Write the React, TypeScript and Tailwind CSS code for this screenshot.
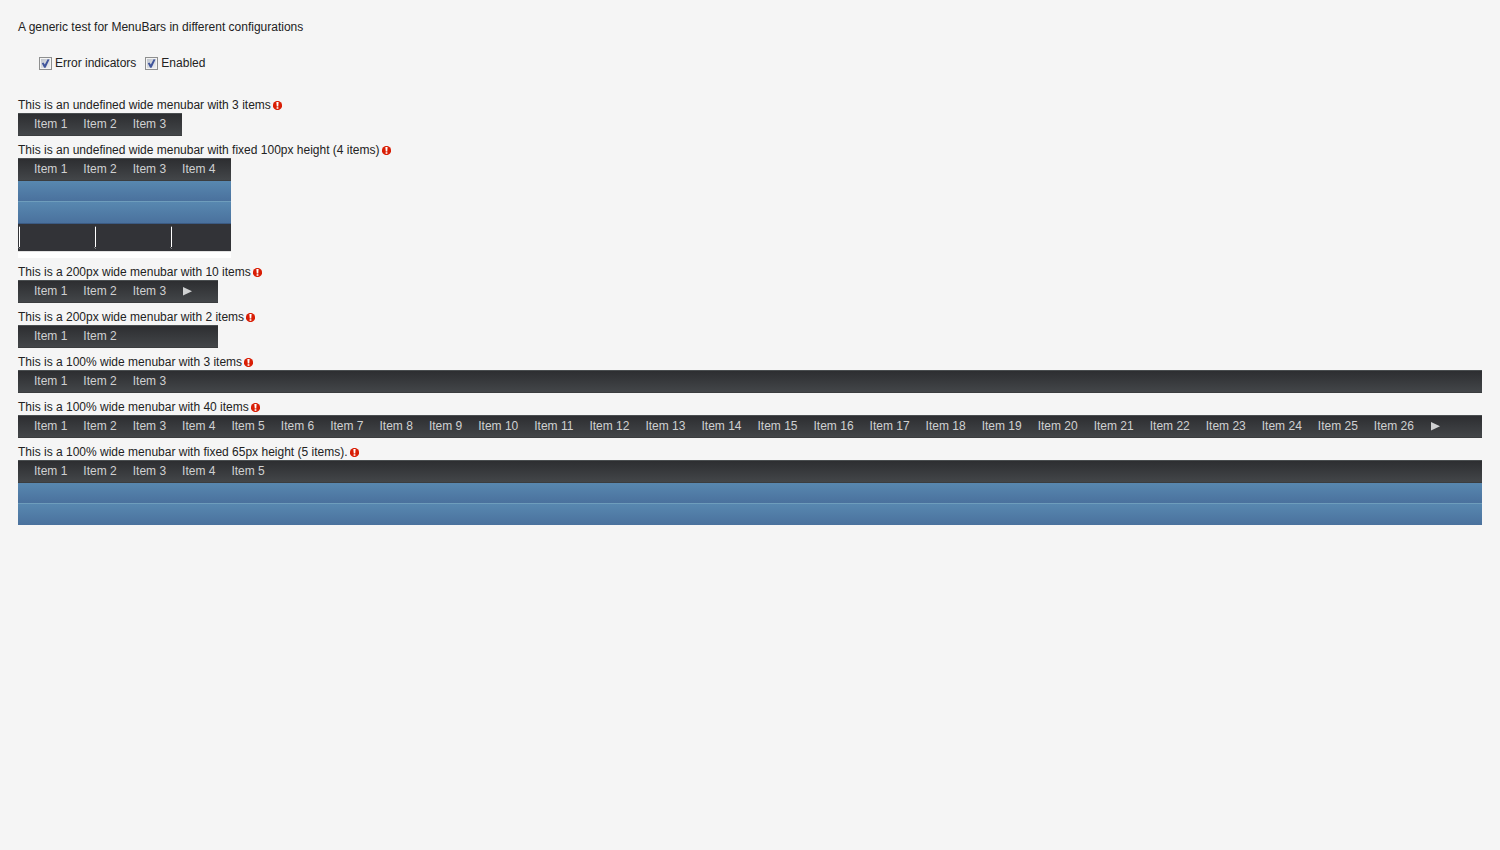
import { useState } from "react";

type BarProps = {
  caption: string;
  count: number;
  className: string;
  more?: boolean;
  fill?: "short" | "tall";
  error: boolean;
  enabled: boolean;
};

const bars: Omit<BarProps, "error" | "enabled">[] = [
  { caption: "This is an undefined wide menubar with 3 items", count: 3, className: "w-fit" },
  {
    caption: "This is an undefined wide menubar with fixed 100px height (4 items)",
    count: 4,
    className: "w-fit h-[100px]",
    fill: "tall",
  },
  { caption: "This is a 200px wide menubar with 10 items", count: 3, className: "w-[200px]", more: true },
  { caption: "This is a 200px wide menubar with 2 items", count: 2, className: "w-[200px]" },
  { caption: "This is a 100% wide menubar with 3 items", count: 3, className: "w-full" },
  { caption: "This is a 100% wide menubar with 40 items", count: 26, className: "w-full", more: true },
  {
    caption: "This is a 100% wide menubar with fixed 65px height (5 items).",
    count: 5,
    className: "w-full h-[65px]",
    fill: "short",
  },
];

function ErrorIcon() {
  return (
    <svg className="h-[9px] w-[9px] shrink-0" viewBox="0 0 9 9" role="img" aria-label="Error">
      <circle cx="4.5" cy="4.5" r="4.6" fill="#d91e05" />
      <path d="M3.4 1h2.2L5.3 5.4H3.7z" fill="#fff" />
      <rect x="3.6" y="6.2" width="1.8" height="1.6" fill="#fff" />
    </svg>
  );
}

function Check({ label, checked, onChange }: { label: string; checked: boolean; onChange: (v: boolean) => void }) {
  return (
    <label className="flex items-center gap-[3px]">
      <span className="grid h-[13px] w-[13px]">
        <input
          type="checkbox"
          checked={checked}
          onChange={(e) => onChange(e.target.checked)}
          className="peer col-start-1 row-start-1 h-[13px] w-[13px] appearance-none border border-[#8e8f8f] bg-linear-to-br from-[#b9bfc9] to-[#f6f6f6] shadow-[inset_0_0_0_1px_#f4f4f4]"
        />
        <svg
          className="pointer-events-none invisible col-start-1 row-start-1 h-[13px] w-[13px] peer-checked:visible"
          viewBox="0 0 13 13"
          aria-hidden="true"
        >
          <path d="M2.8 6.2l1.7-.7 1.3 2.1L8.6 2.2l1.9.2L6.6 10.8H5.1z" fill="#41569c" />
        </svg>
      </span>
      <span>{label}</span>
    </label>
  );
}

function BarFill({ kind }: { kind: "short" | "tall" }) {
  return (
    <div aria-hidden="true">
      <div className="h-5 bg-linear-to-b from-[#5888b0] to-[#4a719d]" />
      <div className="h-[22px] border-t border-[#6e9dbc] bg-linear-to-b from-[#5888b0] to-[#4a719d]" />
      {kind === "tall" && (
        <>
          <div className="h-px bg-[#3b5a82]" />
          <div className="h-[27px] overflow-hidden bg-[#323337]">
            <svg className="h-[27px] w-0 min-w-full" fill="none">
              <defs>
                <pattern id="ticks" width="76" height="27" patternUnits="userSpaceOnUse">
                  <rect x="1" y="2" width="1" height="1" fill="#77787b" />
                  <rect x="1" y="3" width="1" height="20" fill="#fff" />
                  <rect x="0" y="23" width="1" height="1" fill="#77787b" />
                  <rect x="1" y="24" width="1" height="1" fill="#77787b" />
                </pattern>
              </defs>
              <rect width="100%" height="27" fill="url(#ticks)" />
            </svg>
          </div>
          <div className="h-[7px] border-t border-[#e2e2e2] bg-white" />
        </>
      )}
    </div>
  );
}

function MenuBar({ caption, count, className, more, fill, error, enabled }: BarProps) {
  return (
    <section>
      <div className="flex h-[15px] items-center gap-[2px] leading-[15px]">
        <h2>{caption}</h2>
        {error && <ErrorIcon />}
      </div>
      <nav aria-label={caption} className={`max-w-full overflow-hidden ${className}`}>
        <div className="flex h-[23px] border-y border-t-[#4a4e50] border-b-[#3b3d3f] bg-linear-to-b from-[#2d2e31] to-[#434649] px-2 leading-[21px] text-[#d0d1d2]">
          {Array.from({ length: count }, (_, i) => (
            <button key={i} type="button" disabled={!enabled} className="shrink-0 px-2 whitespace-nowrap">
              Item {i + 1}
            </button>
          ))}
          {more && (
            <button type="button" disabled={!enabled} aria-label="More items" className="flex shrink-0 items-center px-[9px]">
              <svg className="h-[9px] w-[9px]" viewBox="0 0 9 9" aria-hidden="true">
                <path d="M0 0L9 4.2 0 8.4z" fill="#d0d1d2" />
              </svg>
            </button>
          )}
        </div>
        {fill && <BarFill kind={fill} />}
      </nav>
    </section>
  );
}

export default function App() {
  const [error, setError] = useState(true);
  const [enabled, setEnabled] = useState(true);
  return (
    <main className="min-h-screen bg-[#f5f5f5] p-[18px] font-['Liberation_Sans',Arial,sans-serif] text-[12px] leading-[18px] text-[#222]">
      <h1>A generic test for MenuBars in different configurations</h1>
      <div className="mt-[18px] mb-[26px] ml-[21px] flex gap-[9px]">
        <Check label="Error indicators" checked={error} onChange={setError} />
        <Check label="Enabled" checked={enabled} onChange={setEnabled} />
      </div>
      <div className="flex flex-col gap-[7px]">
        {bars.map((bar) => (
          <MenuBar key={bar.caption} {...bar} error={error} enabled={enabled} />
        ))}
      </div>
    </main>
  );
}
